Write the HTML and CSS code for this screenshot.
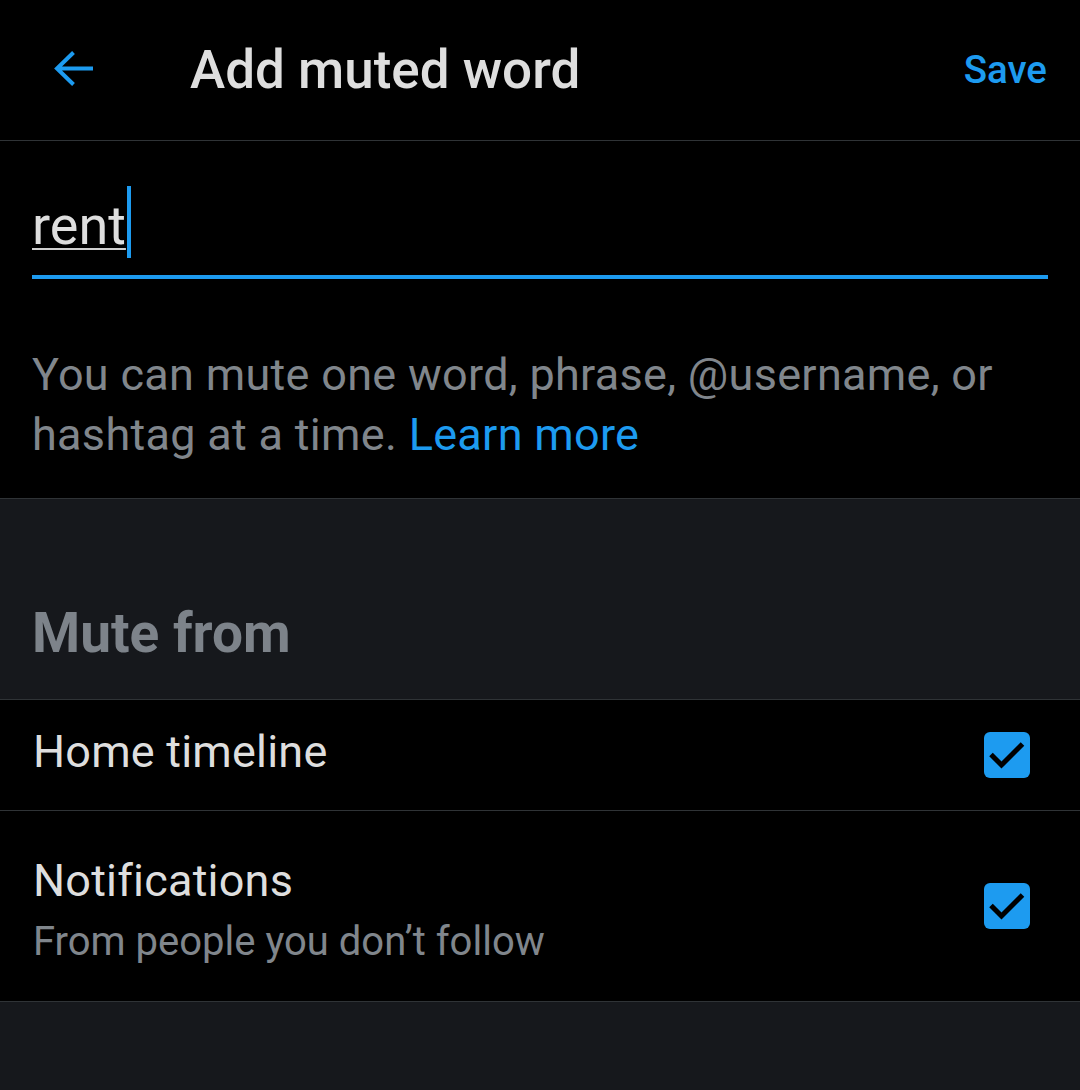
FILE: index.html
```html
<!DOCTYPE html>
<html lang="en">
<head>
<meta charset="utf-8">
<title>Add muted word</title>
<link rel="stylesheet" href="styles.css">
</head>
<body>
<div class="screen">
  <header class="topbar">
    <svg class="back" viewBox="0 0 42 42" width="42" height="42" aria-hidden="true">
      <path d="M40 20.5 H5 M20.5 4.5 L4 20.5 L20.5 36.5" fill="none" stroke="#1d9bf0" stroke-width="4" stroke-linecap="butt" stroke-linejoin="miter"/>
    </svg>
    <h1 class="title">Add muted word</h1>
    <span class="save">Save</span>
  </header>

  <section class="entry">
    <div class="field">
      <span class="typed">rent</span><span class="cursor"></span>
    </div>
    <div class="field-line"></div>
    <p class="help">You can mute one word, phrase, @username, or hashtag at a time. <span class="link">Learn more</span></p>
  </section>

  <section class="group-head">
    <h2 class="group-title">Mute from</h2>
  </section>

  <div class="row row-single">
    <div class="row-text">
      <div class="row-label">Home timeline</div>
    </div>
    <svg class="check" viewBox="0 0 46 46" width="46" height="46" aria-hidden="true">
      <rect x="0" y="0" width="46" height="46" rx="6" fill="#1d9bf0"/>
      <path d="M7 22.5 L17.5 33 L38.5 12" fill="none" stroke="#000" stroke-width="5"/>
    </svg>
  </div>

  <div class="row row-double">
    <div class="row-text">
      <div class="row-label">Notifications</div>
      <div class="row-sub">From people you don’t follow</div>
    </div>
    <svg class="check" viewBox="0 0 46 46" width="46" height="46" aria-hidden="true">
      <rect x="0" y="0" width="46" height="46" rx="6" fill="#1d9bf0"/>
      <path d="M7 22.5 L17.5 33 L38.5 12" fill="none" stroke="#000" stroke-width="5"/>
    </svg>
  </div>

  <div class="filler"></div>
</div>
</body>
</html>
```

FILE: styles.css
```css
* { box-sizing: border-box; }

html, body {
  margin: 0;
  padding: 0;
  background: #000;
  height: 100%;
}

body {
  font-family: Roboto, "Noto Sans", Arial, sans-serif;
  color: #dedede;
}

.screen {
  width: 1080px;
  min-height: 1090px;
  display: flex;
  flex-direction: column;
  background: #000;
}

.topbar {
  height: 141px;
  display: flex;
  align-items: center;
  padding: 0 33px 0 53px;
  border-bottom: 1px solid #2f3336;
}

.back {
  flex: none;
  display: block;
  margin-top: -3px;
}

.title {
  margin: 0 0 0 95px;
  font-size: 53px;
  font-weight: 500;
  line-height: 66px;
  color: #dedede;
  flex: 1;
}

.save {
  font-size: 38.5px;
  font-weight: 500;
  line-height: 46px;
  color: #1d9bf0;
}

.entry {
  padding: 53px 32px 33px 32px;
  border-bottom: 1px solid #2f3336;
}

.field {
  height: 64px;
  display: flex;
  align-items: flex-start;
  font-size: 54px;
  line-height: 64px;
  color: #dedede;
}

.typed {
  text-decoration: underline;
  text-decoration-color: #cfcfcf;
  text-decoration-thickness: 2px;
  text-underline-offset: 4px;
}

.cursor {
  display: block;
  width: 4px;
  height: 72px;
  margin-top: -8px;
  margin-left: 1px;
  background: #1d9bf0;
}

.field-line {
  height: 4px;
  margin-top: 17px;
  background: #1d9bf0;
}

.help {
  margin: 66px 0 0 0;
  font-size: 45px;
  line-height: 60px;
  letter-spacing: 0.3px;
  color: #80868c;
}

.link {
  color: #1d9bf0;
}

.group-head {
  background: #16181c;
  padding: 101px 32px 33px 32px;
  border-bottom: 1px solid #2f3336;
}

.group-title {
  margin: 0;
  font-size: 55px;
  font-weight: 700;
  line-height: 66px;
  color: #7d838a;
}

.row {
  display: flex;
  align-items: center;
  padding-left: 33px;
  padding-right: 50px;
  border-bottom: 1px solid #2f3336;
}

.row-single {
  height: 111px;
}

.row-double {
  height: 191px;
}

.row-text {
  flex: 1;
}

.row-single .row-text {
  padding-bottom: 7px;
}

.row-double .row-text {
  padding-top: 9px;
}

.row-label {
  font-size: 45px;
  line-height: 56px;
  letter-spacing: 0.2px;
  color: #dedede;
}

.row-sub {
  margin-top: 7px;
  font-size: 40px;
  line-height: 52px;
  color: #80868c;
}

.check {
  flex: none;
  display: block;
}

.filler {
  flex: 1;
  background: #16181c;
}
```
